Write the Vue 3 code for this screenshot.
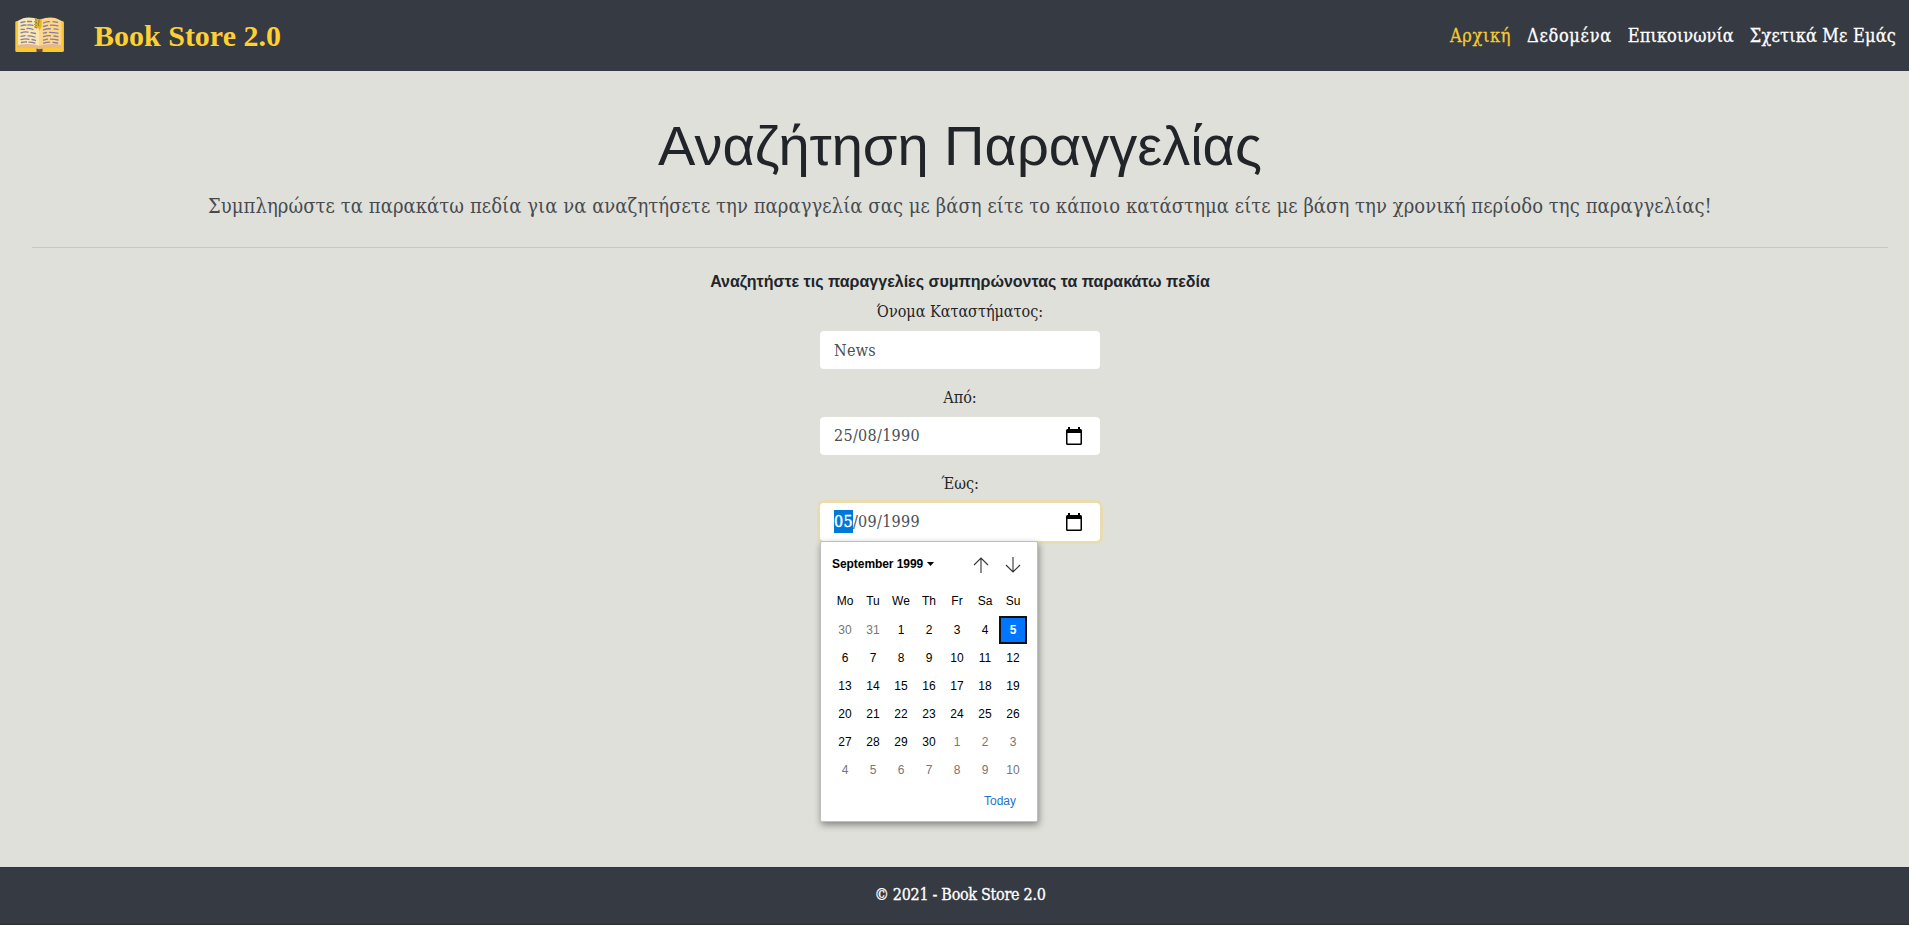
<script setup>
const links = ['Αρχική', 'Δεδομένα', 'Επικοινωνία', 'Σχετικά Με Εμάς']
const weekdays = ['Mo', 'Tu', 'We', 'Th', 'Fr', 'Sa', 'Su']
const days = Array.from({ length: 42 }, (_, i) => {
  const n = i - 1
  if (n < 1) return { n: n + 31, muted: true }
  if (n > 30) return { n: n - 30, muted: true }
  return { n, muted: false, selected: n === 5 }
})
</script>

<template>
  <div class="page">
    <header class="navbar">
      <svg class="logo" width="50" height="38" viewBox="0 0 50 38">
        <rect x="0.3" y="5" width="48.6" height="31" rx="1.6" fill="#fcc82f" />
        <path d="M21.5 32h6v4h-6z" fill="#5e4d28" />
        <path d="M3 30.5V4.8Q12-1.5 24.6 3.8V32.5Q13 28.5 3 32.5z" fill="#fbe6b5" />
        <path d="M46.300 30.500V4.800Q37-1.500 24.600 3.800V32.500Q36 28.500 46.300 32.500z" fill="#fed58b" />
        <path d="M3 29q11-2.500 21.600.8v3.400Q14 30.800 3 32.600zM46.300 29q-11-2.500-21.700.8v3.400q11-2.400 21.700-.6z" fill="#e5b98a" />
        <path d="M20.500 2.200l4.100 1.400 2-1.100v7.900l-2 4-1.300-2.600-1.900 1z" fill="#e3b51d" />
        <path d="M20 3l1.500 1-2 2 2.500.5-2.500 2 2 1-2 1.500 2.500 1M24 4v2l-1 2 1 2" stroke="#8b742c" stroke-width=".9" fill="none" />
        <g fill="none" stroke="#858095" stroke-width="1.300" stroke-linecap="round">
          <path d="M6 6.500l4-.8M12.500 5.500h4M6 10q3-1.500 5-.8M13 9q2-.4 5 .4M6 13.300h3.500M12 12.500q3-.2 6 1M6 16.800q4-1.500 7-.6M16 16.600l4.500.9M6 20.300l4-.7M13 19.800q3 0 7 1.200M6 23.700q5-1.400 8-.4M17 23.500l3.500.9M6.500 26.500q3-.8 5-.5M14 26.200q3 0 6 .9" />
          <path d="M28.500 7q3-1.500 6-1.400M38 5.700l4.500.7M28.500 10.500l4-1.100M35.500 9.200q4-.2 7.500.7M28.500 13.800q4-1.300 7-1M39 12.800l4 .5M28.500 17.200l3-.7M34.500 16.300q4 0 8.500.8M28.500 20.700q4-1.300 7-.9M39 20l4 .6M28.500 24.200l4-1M35.500 23.200q4 0 7.500.8M28.500 27.200q4-1.100 6-1M38 26.300l4.500.7" />
        </g>
      </svg>
      <span class="brand">Book Store 2.0</span>
      <nav class="links">
        <a v-for="(l, i) in links" :key="l" :class="['link', 'link-' + i]">{{ l }}</a>
      </nav>
    </header>

    <main class="content">
      <h1>Αναζήτηση Παραγγελίας</h1>
      <p class="lead">Συμπληρώστε τα παρακάτω πεδία για να αναζητήσετε την παραγγελία σας με βάση είτε το κάποιο κατάστημα είτε με βάση την χρονική περίοδο της παραγγελίας!</p>
      <div class="rule"></div>
      <p class="hint">Αναζητήστε τις παραγγελίες συμπηρώνοντας τα παρακάτω πεδία</p>
      <form class="form">
        <label class="store">Όνομα Καταστήματος:</label>
        <div class="control"><span class="news">News</span></div>
        <label>Από:</label>
        <div class="control">
          <span class="date">25/08/1990</span>
          <svg class="cal" width="16" height="18" viewBox="0 0 16 18"><path d="M2 0h2v2h8V0h2v2H14.500Q16 2 16 3.500V16.500Q16 18 14.500 18H1.500Q0 18 0 16.500V3.500Q0 2 1.500 2H2zM1.500 6V16.500H14.500V6z" fill="#000" fill-rule="evenodd" /></svg>
        </div>
        <label>Έως:</label>
        <div class="control focused">
          <span class="date"><span class="sel">05</span>/09/1999</span>
          <svg class="cal" width="16" height="18" viewBox="0 0 16 18"><path d="M2 0h2v2h8V0h2v2H14.500Q16 2 16 3.500V16.500Q16 18 14.500 18H1.500Q0 18 0 16.500V3.500Q0 2 1.500 2H2zM1.500 6V16.500H14.500V6z" fill="#000" fill-rule="evenodd" /></svg>
          <div class="picker">
            <div class="picker-head">
              <b>September 1999</b>
              <svg class="caret" width="7" height="4" viewBox="0 0 7 4"><path d="M0 0h7L3.500 4z" /></svg>
              <svg class="arrow" width="16" height="16" viewBox="0 0 16 16"><path d="M8 16V1M1 8l7-7 7 7" /></svg>
              <svg class="arrow" width="16" height="16" viewBox="0 0 16 16"><path d="M8 0v15M1 8l7 7 7-7" /></svg>
            </div>
            <div class="grid weekdays"><span v-for="w in weekdays" :key="w">{{ w }}</span></div>
            <div class="grid">
              <span v-for="(d, i) in days" :key="i" :class="{ muted: d.muted, selected: d.selected }">{{ d.n }}</span>
            </div>
            <div class="today">Today</div>
          </div>
        </div>
      </form>
    </main>

    <footer class="footer">© 2021 - Book Store 2.0</footer>
  </div>
</template>

<style>
body { margin: 0; overflow: hidden; }
</style>

<style scoped>
.page {
  display: flex;
  flex-direction: column;
  width: 100%;
  height: 925px;
  background: #dfe0da;
  color: #212529;
  font-family: "Roboto Slab", "DejaVu Serif Condensed", "DejaVu Serif", serif;
  font-size: 16px;
  line-height: 24px;
}
.navbar {
  display: flex;
  align-items: center;
  flex: none;
  box-sizing: border-box;
  height: 71px;
  padding: 0 13px 0 15px;
  background: #363a42;
}
.logo { flex: none; margin-top: -1px; }
.brand {
  margin-left: 29px;
  color: #ffd034;
  font: bold 30px/36px "Liberation Serif", serif;
}
.links { display: flex; gap: 16px; margin-left: auto; }
.link {
  color: #fff;
  font-size: 18px;
  -webkit-text-stroke: .3px currentColor;
}
.link-0 { color: #f4c932; letter-spacing: .63px; }
.link-1 { letter-spacing: .7px; }
.link-2 { letter-spacing: .07px; }
.link-3 { letter-spacing: .17px; }
.content {
  flex: 1;
  padding: 41px 21px 0 32px;
  text-align: center;
}
h1 {
  margin: 0;
  font: 400 56px/68px "Liberation Sans", sans-serif;
}
.lead {
  margin: 11px 0 0;
  color: #474b4f;
  font-size: 20px;
  line-height: 30px;
  letter-spacing: .07px;
  white-space: nowrap;
}
.rule { height: 1px; margin-top: 26px; background: #c8c9c4; }
.hint {
  margin: 22px 0 0;
  font: bold 16px/24px "Liberation Sans", sans-serif;
}
.form { width: 280px; margin: 5px auto 0; }
label { display: block; height: 24px; margin-bottom: 8px; line-height: 26px; }
.control {
  position: relative;
  display: flex;
  align-items: center;
  box-sizing: border-box;
  height: 38px;
  margin-bottom: 16px;
  padding: 0 18px 0 14px;
  border-radius: 4px;
  background: #fff;
  color: #495057;
}
.news { padding-top: 2px; letter-spacing: .3px; }
.date { letter-spacing: .3px; }
.sel {
  display: inline-block;
  background: #0078d7;
  color: #fff;
  line-height: 23px;
  -webkit-text-stroke: .4px #fff;
}
.cal { margin-left: auto; }
.focused { box-shadow: 0 0 0 3px #e8dcb0; }
.picker {
  position: absolute;
  top: 38px;
  left: 0;
  box-sizing: border-box;
  width: 218px;
  height: 281px;
  padding: 0 10px;
  border: 1px solid #bfbfbf;
  border-radius: 2px;
  background: #fff;
  box-shadow: 1px 3px 7px rgba(0, 0, 0, .4);
  color: #000;
  font: 12px/28px "Liberation Sans", sans-serif;
}
.picker-head { display: flex; align-items: center; height: 45px; padding-right: 6px; }
.picker-head b { margin: 0 0 1px 1px; letter-spacing: -.06px; }
.caret { margin: 0 0 1px 4px; }
.arrow { margin: 1px 0 0 16px; fill: none; stroke: #333; stroke-width: 1.1; }
.caret + .arrow { margin-left: auto; }
.grid { display: grid; grid-template-columns: repeat(7, 28px); grid-auto-rows: 28px; }
.weekdays { height: 28px; margin-bottom: 1px; }
.muted { color: #767676; }
.selected {
  box-sizing: border-box;
  border: 2px solid #101010;
  background: #0075ff;
  color: #fff;
  font-weight: bold;
  line-height: 24px;
}
.today { height: 28px; margin-top: 3px; padding-right: 11px; color: #1a74d0; text-align: right; }
.footer {
  flex: none;
  box-sizing: border-box;
  height: 58px;
  padding: 15px 0 0 11px;
  border-top: 1px solid #303338;
  border-bottom: 1px solid #2b2e33;
  background: #363a42;
  color: #fff;
  letter-spacing: -.3px;
  text-align: center;
  -webkit-text-stroke: .3px currentColor;
}
</style>
